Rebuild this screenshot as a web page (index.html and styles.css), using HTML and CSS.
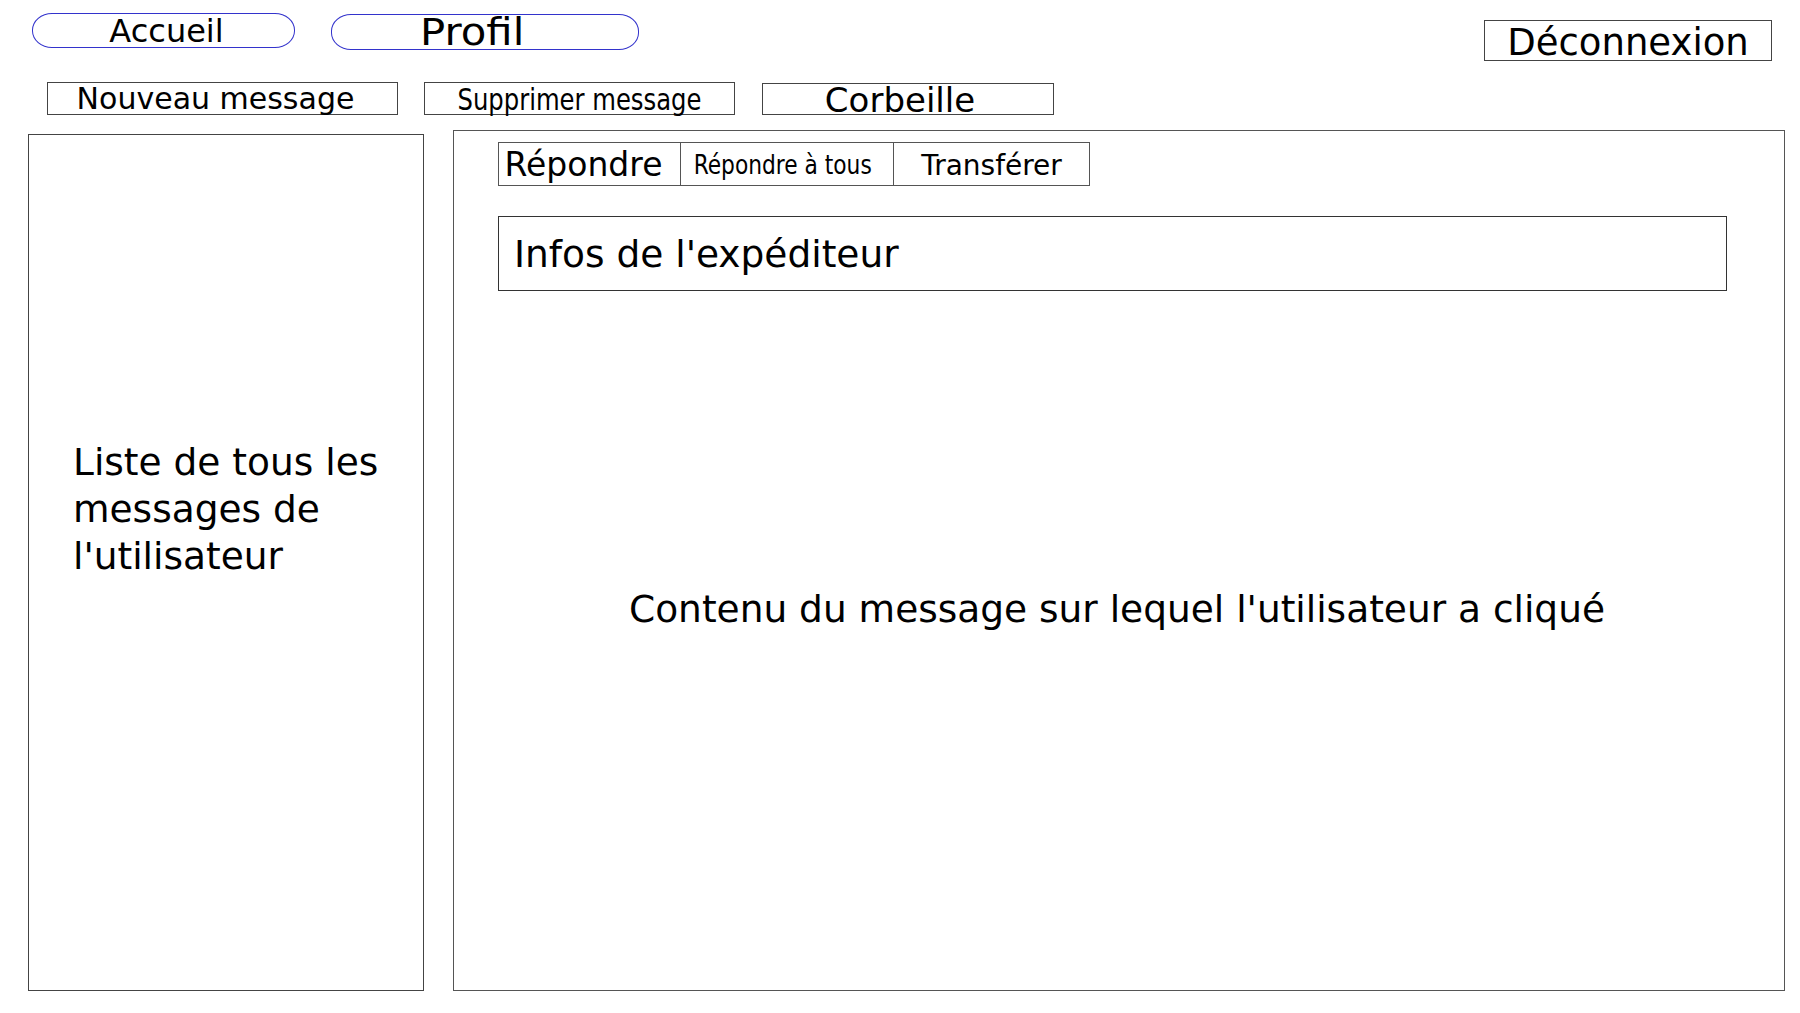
FILE: index.html
```html
<!DOCTYPE html>
<html lang="fr">
<head>
<meta charset="utf-8">
<title>Messagerie</title>
<link rel="stylesheet" href="styles.css">
</head>
<body>
<div class="page">
  <header class="topbar">
    <div class="pill pill-home">Accueil</div>
    <div class="pill pill-profile"><span class="stretch">Profil</span></div>
    <div class="box logout">Déconnexion</div>
  </header>
  <nav class="actions">
    <div class="box act-new">Nouveau message</div>
    <div class="box act-del"><span class="narrow">Supprimer message</span></div>
    <div class="box act-trash">Corbeille</div>
  </nav>
  <main class="workspace">
    <aside class="msg-list">Liste de tous les messages de l'utilisateur</aside>
    <section class="reader">
      <div class="reply-bar">
        <div class="cell cell-reply">Répondre</div>
        <div class="cell cell-all"><span class="narrow-sm">Répondre à tous</span></div>
        <div class="cell cell-fwd">Transférer</div>
      </div>
      <div class="sender">Infos de l'expéditeur</div>
      <div class="content">Contenu du message sur lequel l'utilisateur a cliqué</div>
    </section>
  </main>
</div>
</body>
</html>
```
FILE: styles.css
```css
html, body {
  margin: 0;
  padding: 0;
  background: #ffffff;
}
body {
  font-family: "DejaVu Sans", "Liberation Sans", sans-serif;
  color: #000;
}
.page {
  width: 1800px;
  height: 1013px;
  overflow: hidden;
}
.topbar {
  display: flex;
  align-items: flex-start;
  padding: 13px 28px 0 32px;
  height: 48px;
}
.pill {
  box-sizing: border-box;
  border: 1px solid #3333cc;
  border-radius: 20px / 17px;
  display: flex;
  align-items: center;
  justify-content: center;
  white-space: nowrap;
}
.pill-home {
  width: 263px;
  height: 35px;
  font-size: 32px;
  padding-left: 6px;
}
.pill-profile {
  width: 308px;
  height: 36px;
  margin-left: 36px;
  margin-top: 1px;
  font-size: 37px;
  padding-right: 26px;
}
.stretch {
  display: inline-block;
  transform: scaleX(1.13);
}
.box {
  box-sizing: border-box;
  border: 1px solid #444;
  display: flex;
  align-items: center;
  justify-content: center;
  white-space: nowrap;
}
.logout {
  margin-left: auto;
  margin-top: 7px;
  width: 288px;
  height: 41px;
  font-size: 37px;
  padding-top: 4px;
}
.actions {
  display: flex;
  align-items: flex-start;
  margin-top: 21px;
  height: 33px;
}
.act-new {
  margin-left: 47px;
  width: 351px;
  height: 33px;
  font-size: 30px;
  padding-right: 14px;
}
.act-del {
  margin-left: 26px;
  width: 311px;
  height: 33px;
  font-family: "DejaVu Sans Condensed", "DejaVu Sans", sans-serif;
  font-stretch: condensed;
  font-size: 30px;
  padding-top: 1px;
}
.narrow {
  display: inline-block;
  transform: scaleX(0.9);
}
.act-trash {
  margin-left: 27px;
  margin-top: 1px;
  width: 292px;
  height: 32px;
  font-size: 34px;
  padding-right: 16px;
  padding-top: 2px;
}
.workspace {
  display: flex;
  align-items: flex-start;
  margin-top: 15px;
}
.msg-list {
  box-sizing: border-box;
  margin-left: 28px;
  margin-top: 4px;
  width: 396px;
  height: 857px;
  border: 1px solid #444;
  padding: 304px 16px 0 44px;
  font-size: 37.5px;
  line-height: 47px;
}
.reader {
  box-sizing: border-box;
  margin-left: 29px;
  width: 1332px;
  height: 861px;
  border: 1px solid #555;
  padding-top: 11px;
}
.reply-bar {
  display: flex;
  width: 592px;
  height: 44px;
  box-sizing: border-box;
  margin-left: 44px;
  border: 1px solid #555;
}
.cell {
  box-sizing: border-box;
  display: flex;
  align-items: center;
  justify-content: center;
  white-space: nowrap;
  height: 42px;
}
.cell-reply {
  width: 181px;
  font-size: 33px;
  padding-right: 12px;
  padding-top: 1px;
}
.cell-all {
  width: 213px;
  border-left: 1px solid #555;
  font-family: "DejaVu Sans Condensed", "DejaVu Sans", sans-serif;
  font-stretch: condensed;
  font-size: 26px;
  padding-right: 8px;
  padding-top: 2px;
}
.narrow-sm {
  display: inline-block;
  transform: scaleX(0.93);
}
.cell-fwd {
  flex: 1;
  border-left: 1px solid #555;
  font-size: 28px;
  padding-top: 3px;
}
.sender {
  box-sizing: border-box;
  margin: 30px 57px 0 44px;
  height: 75px;
  border: 1px solid #333;
  display: flex;
  align-items: center;
  padding-left: 15px;
  font-size: 37.5px;
  white-space: nowrap;
}
.content {
  margin-top: 296px;
  text-align: center;
  padding-right: 4px;
  font-size: 37.5px;
  white-space: nowrap;
}
```
